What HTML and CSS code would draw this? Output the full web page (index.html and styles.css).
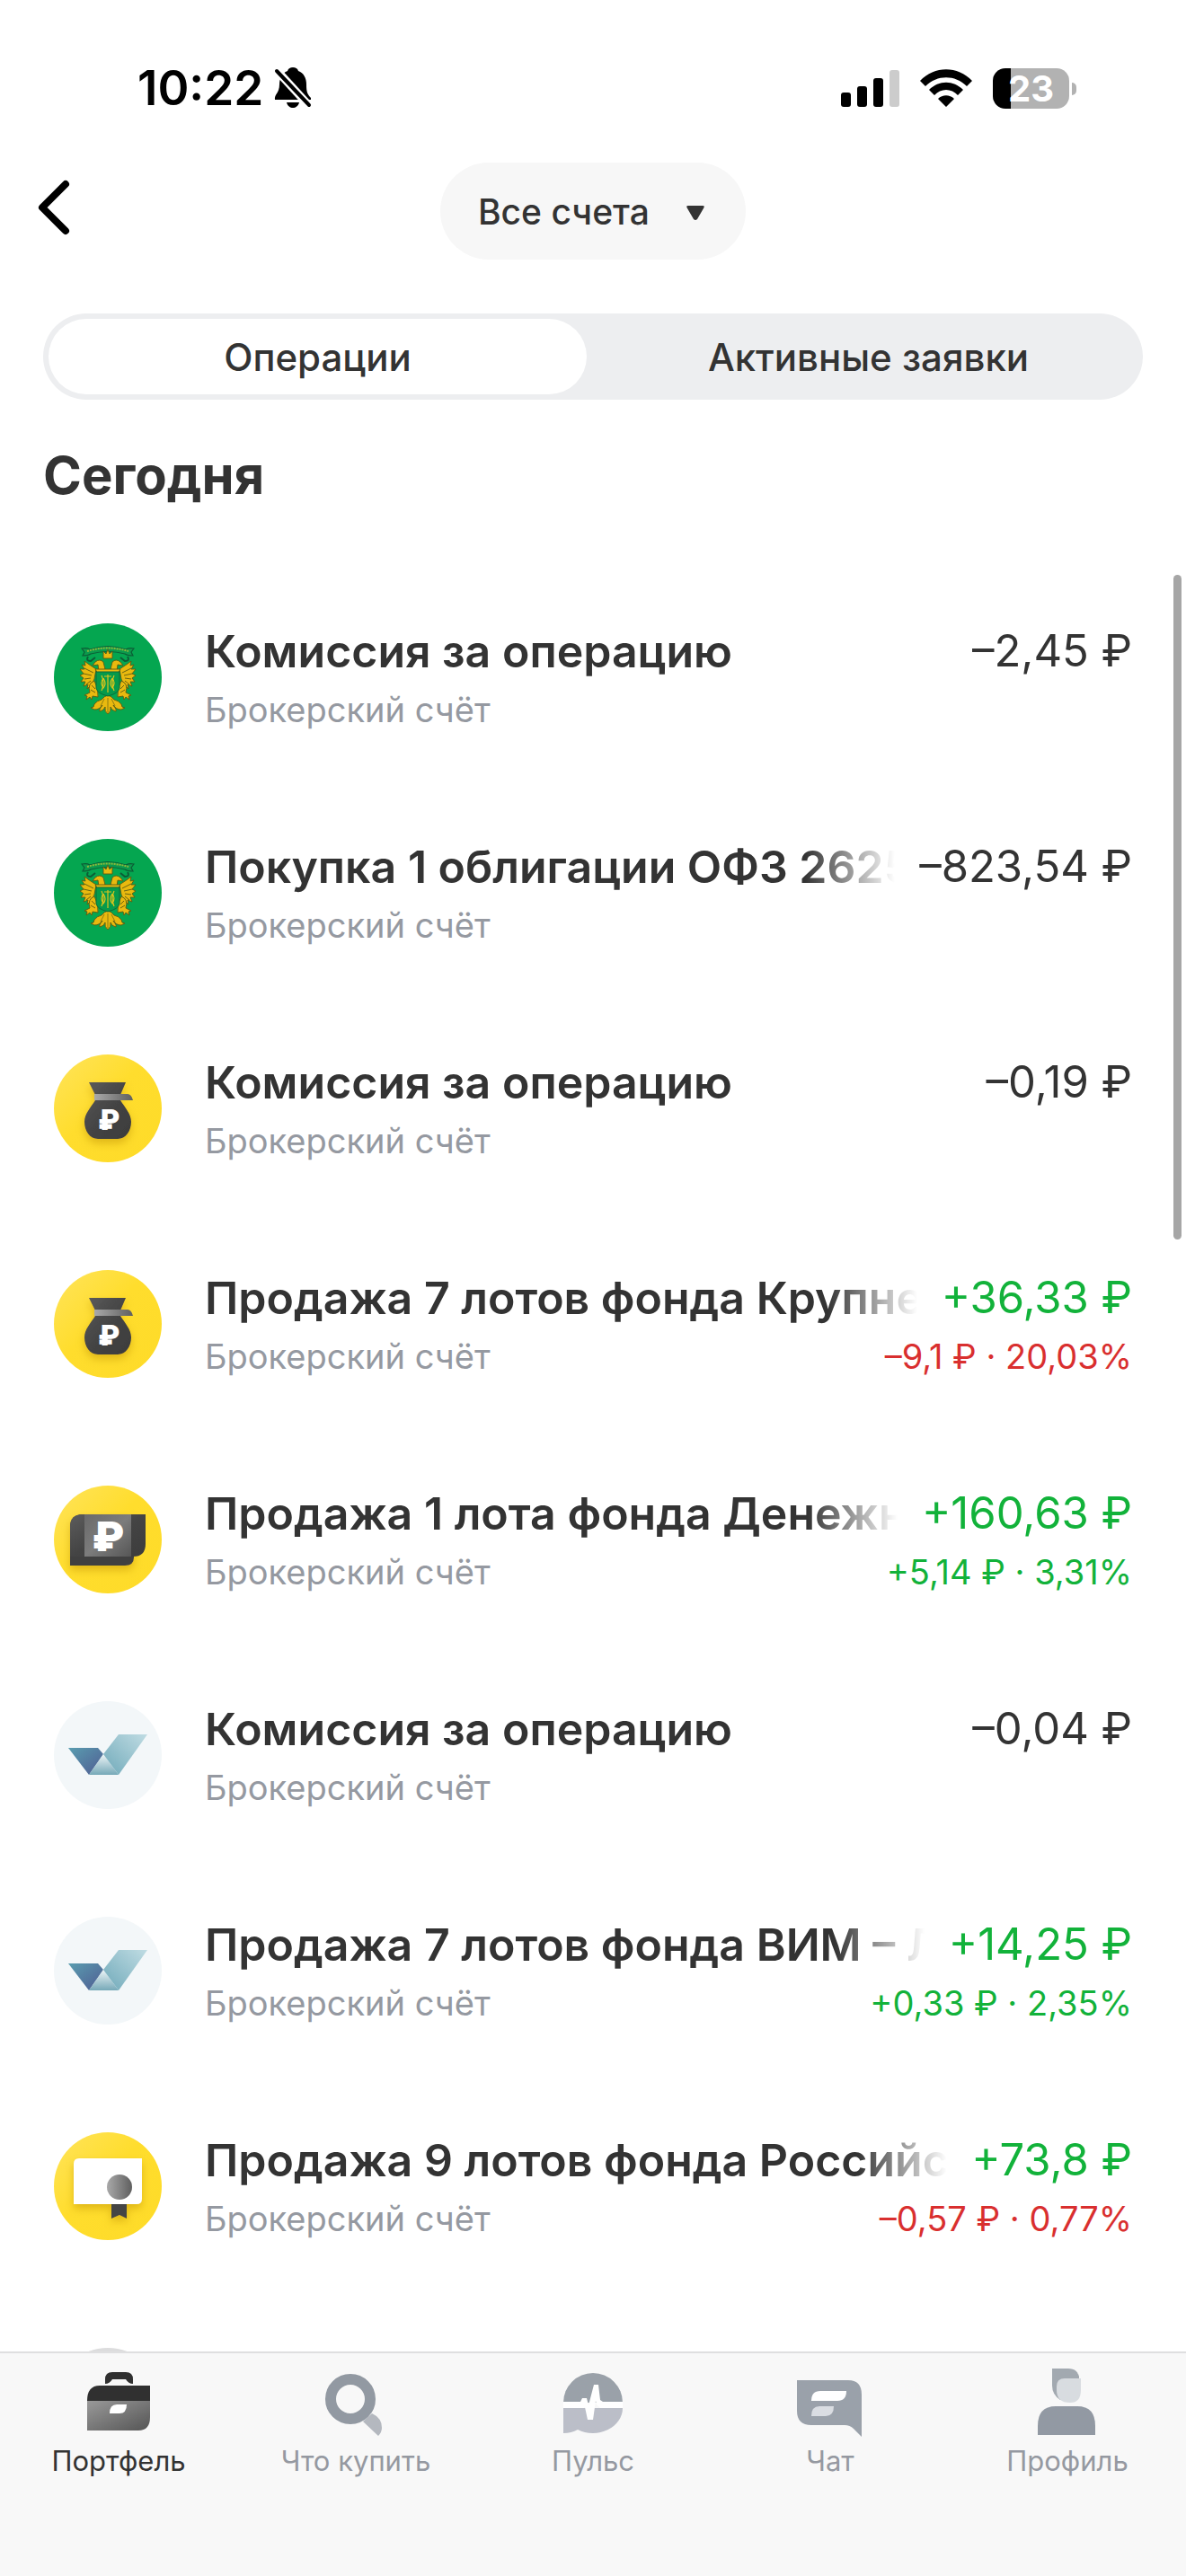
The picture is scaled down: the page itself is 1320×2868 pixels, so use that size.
FILE: index.html
```html
<!DOCTYPE html>
<html lang="ru">
<head>
    <meta charset="UTF-8">
    <meta name="viewport" content="width=device-width, initial-scale=1.0">
    <title>Операции</title>
    <link rel="stylesheet" href="styles.css">
</head>
<body>
    <!-- shared icons -->
    <svg class="sprite" aria-hidden="true">
        <defs>
            <linearGradient id="yellow" x1="0" y1="0" x2="1" y2="1">
                <stop offset="0" stop-color="#ffe45c"/>
                <stop offset="0.45" stop-color="#ffdd2d"/>
                <stop offset="1" stop-color="#fedb28"/>
            </linearGradient>
            <linearGradient id="dark" x1="0" y1="0" x2="1" y2="1">
                <stop offset="0" stop-color="#5c5c5c"/>
                <stop offset="0.5" stop-color="#444"/>
                <stop offset="1" stop-color="#3c3c3c"/>
            </linearGradient>
            <linearGradient id="band" x1="0" y1="0" x2="1" y2="0">
                <stop offset="0" stop-color="#a9a9a9"/>
                <stop offset="1" stop-color="#5f5f5f"/>
            </linearGradient>
            <linearGradient id="note" x1="0" y1="0" x2="1" y2="1">
                <stop offset="0" stop-color="#6a6a6a"/>
                <stop offset="0.5" stop-color="#7c7c7c"/>
                <stop offset="1" stop-color="#565656"/>
            </linearGradient>
            <linearGradient id="vimLeft" x1="0" y1="0" x2="1" y2="1">
                <stop offset="0" stop-color="#5a9db0"/>
                <stop offset="1" stop-color="#4f5c92"/>
            </linearGradient>
            <linearGradient id="vimMid" x1="0" y1="0" x2="0" y2="1">
                <stop offset="0" stop-color="#eef5f7"/>
                <stop offset="1" stop-color="#76a9b8"/>
            </linearGradient>
            <linearGradient id="vimRight" x1="1" y1="0" x2="0" y2="1">
                <stop offset="0" stop-color="#c0dce3"/>
                <stop offset="1" stop-color="#6fa9b9"/>
            </linearGradient>
            <linearGradient id="caseBody" x1="0" y1="0" x2="1" y2="1">
                <stop offset="0" stop-color="#999"/>
                <stop offset="1" stop-color="#555"/>
            </linearGradient>
            <filter id="shadow" x="-30%" y="-30%" width="160%" height="170%">
                <feDropShadow dx="0" dy="5" stdDeviation="5" flood-color="#b98a00" flood-opacity="0.45"/>
            </filter>

            <symbol id="ofz" viewBox="0 0 120 120">
                <circle cx="60" cy="60" r="60" fill="#05a650"/>
                <path d="M31 28q6-1 9 1 20-7 40 0 4-2 9-1l-3 4 2 4q-6 0-9-2-19-5-38 0-3 2-9 2l2-4z" fill="#0b9a4c" stroke="#0c5c35" stroke-width="1.2"/>
                <path d="M37 31q22-7 46 0" fill="none" stroke="#8fb83a" stroke-width="2" stroke-dasharray="2 1"/>
                <path d="M38 37q-3 5 3 5l5-4M82 37q3 5-3 5l-5-4" fill="none" stroke="#0c5c35" stroke-width="2"/>
                <g fill="#e9b90f" stroke="#5b5a12" stroke-width="0.9" stroke-linejoin="round">
                    <path d="M55 31l3 3 2-5 2 5 3-3v8H55z"/>
                    <path d="M57 51l-2-8q-4-4-9 0l-3 4 6-1 1 7zM63 51l2-8q4-4 9 0l3 4-6-1-1 7z"/>
                    <g id="wing">
                        <path d="M47 51l-9-6-4-3 1 5-4-1 3 5-5 0 4 5-4 2 4 3-3 4 5 0-2 5 5-2-1 5q7-5 8-11z"/>
                        <path d="M34 50l10 5M33 56l9 2M34 62l7-1M36 68l5-4" fill="none"/>
                        <path d="M45 64q-8 3-5 13l-6 3 3 1-1 4 4-3 2 3 1-4 6 1q1-10-4-18z"/>
                        <path d="M42 69l4 4M41 74l5 3" fill="none"/>
                    </g>
                    <use href="#wing" transform="matrix(-1 0 0 1 120 0)"/>
                    <path d="M46 51h28l-3 5H49z"/>
                    <path d="M60 80q-4 1-7 5-5 1-8 5 0 4-4 4l4 2q6 0 9-5-4 5-3 7 5-1 6-5-1 5 3 8 4-3 3-8 1 4 6 5 1-2-3-7 3 5 9 5l4-2q-4 0-4-4-3-4-8-5-3-4-7-5z"/>
                </g>
                <path d="M60 83v16M56 84l-4 8M64 84l4 8" stroke="#8f7d10" stroke-width="1"/>
                <path d="M47 54h26v18q-1 6-13 9-12-3-13-9z" fill="#069a4b" stroke="#0c6b3a" stroke-width="1"/>
                <path d="M53 58q4 8 0 17M67 58q-4 8 0 17M60 57v20M56 59h8M55 61q-4 5 0 11 4-5 0-11M65 61q4 5 0 11-4-5 0-11" fill="none" stroke="#dcc41c" stroke-width="1.2"/>
            </symbol>

            <symbol id="bag" viewBox="0 0 120 120">
                <circle cx="60" cy="60" r="60" fill="url(#yellow)"/>
                <g filter="url(#shadow)">
                    <path d="M39 31h41l-6 14v6c5 8 12 15 12 24 0 10-6 19-15 19H49c-9 0-15-9-15-19 0-9 7-16 12-24v-6z" fill="url(#dark)"/>
                </g>
                <path d="M45 44h37q4 0 6 7H45z" fill="url(#band)"/>
                <text x="61" y="84" class="glyph glyph-small">₽</text>
            </symbol>

            <symbol id="money" viewBox="0 0 120 120">
                <circle cx="60" cy="60" r="60" fill="url(#yellow)"/>
                <path d="M32 32h57v48q0 9-10 9H18V46q0-14 14-14z" fill="#3f3f3f" filter="url(#shadow)"/>
                <path d="M32 32h70v33q0 14-14 14H18V46q0-14 14-14z" fill="url(#dark)"/>
                <path d="M34 32h52v47H34z" fill="url(#note)"/>
                <text x="60" y="73" class="glyph">₽</text>
            </symbol>

            <symbol id="vim" viewBox="0 0 120 120">
                <circle cx="60" cy="60" r="60" fill="#f3f7f9"/>
                <path d="M16 52h33l6 7-16 23z" fill="url(#vimLeft)"/>
                <path d="M55 59l17 23H39z" fill="url(#vimMid)"/>
                <path d="M72 37h32L72 82 55 59z" fill="url(#vimRight)"/>
            </symbol>

            <symbol id="cert" viewBox="0 0 120 120">
                <circle cx="60" cy="60" r="60" fill="url(#yellow)"/>
                <g filter="url(#shadow)">
                    <path d="M28 29h70v45q0 6-6 6H22V35q0-6 6-6z" fill="#fff"/>
                    <path d="M64 80h17v16l-8-4-9 4z" fill="#444"/>
                </g>
                <circle cx="73" cy="61" r="14" fill="url(#band)"/>
            </symbol>

            <symbol id="plain" viewBox="0 0 120 120">
                <circle cx="60" cy="60" r="60" fill="#dcdcdd"/>
            </symbol>
        </defs>
    </svg>

    <header class="header">
        <div class="status">
            <div class="status-left">
                <time>10:22</time>
                <svg width="42" height="46" viewBox="0 0 42 46">
                    <path d="M21 0c3 0 5 1 6 4 6 2 9 8 9 15 0 8 1 11 5 15v2H1c-1-6 5-7 5-17C6 12 9 6 15 4c1-3 3-4 6-4zM14 39h14c-1 4-4 6-7 6s-6-2-7-6z"/>
                    <path d="M0 0l42 46" stroke="#fff" stroke-width="9"/>
                    <path d="M3 4l36 38" stroke="#000" stroke-width="4" stroke-linecap="round"/>
                </svg>
            </div>
            <div class="status-right">
                <svg width="65" height="42" viewBox="0 0 65 42">
                    <rect x="0" y="26" width="11" height="16" rx="3"/>
                    <rect x="18" y="19" width="11" height="23" rx="3"/>
                    <rect x="36" y="10" width="11" height="32" rx="3"/>
                    <rect x="54" y="1" width="11" height="41" rx="3" fill="#ccc"/>
                </svg>
                <svg width="58" height="42" viewBox="0 0 58 42">
                    <path d="M0 13C16-4 42-4 58 13l-6 6C39 6 19 6 6 19zM10 23c11-11 27-11 38 0l-6 6c-7-8-19-8-26 0zM20 33c5-5 13-5 18 0l-9 9z"/>
                </svg>
                <div class="battery"><span>23</span></div>
            </div>
        </div>

        <div class="nav">
            <button class="back" aria-label="Назад">
                <svg width="36" height="62" viewBox="0 0 36 62">
                    <path d="M31 5L5 31l26 26" fill="none" stroke="#000" stroke-width="8" stroke-linecap="round" stroke-linejoin="round"/>
                </svg>
            </button>
            <div class="account">
                <select aria-label="Счёт">
                    <option>Все счета</option>
                </select>
                <svg width="20" height="16" viewBox="0 0 20 16">
                    <path d="M2 0h16q3 0 1 3l-7 12q-2 2-4 0L1 3q-2-3 1-3z" fill="#333"/>
                </svg>
            </div>
        </div>

        <div class="tabs" role="tablist">
            <button class="tab active" role="tab" aria-selected="true">Операции</button>
            <button class="tab" role="tab" aria-selected="false">Активные заявки</button>
        </div>
    </header>

    <main class="content">
        <h1>Сегодня</h1>
        <ul class="operations">
            <li>
                <svg class="avatar"><use href="#ofz"/></svg>
                <div class="info">
                    <div class="line"><span class="title">Комиссия за операцию</span><span class="amount">–2,45 ₽</span></div>
                    <div class="line small"><span class="account-name">Брокерский счёт</span></div>
                </div>
            </li>
            <li>
                <svg class="avatar"><use href="#ofz"/></svg>
                <div class="info">
                    <div class="line"><span class="title fade">Покупка 1 облигации ОФЗ 2625</span><span class="amount">–823,54 ₽</span></div>
                    <div class="line small"><span class="account-name">Брокерский счёт</span></div>
                </div>
            </li>
            <li>
                <svg class="avatar"><use href="#bag"/></svg>
                <div class="info">
                    <div class="line"><span class="title">Комиссия за операцию</span><span class="amount">–0,19 ₽</span></div>
                    <div class="line small"><span class="account-name">Брокерский счёт</span></div>
                </div>
            </li>
            <li>
                <svg class="avatar"><use href="#bag"/></svg>
                <div class="info">
                    <div class="line"><span class="title fade">Продажа 7 лотов фонда Крупней</span><span class="amount plus">+36,33 ₽</span></div>
                    <div class="line small"><span class="account-name">Брокерский счёт</span><span class="minus">–9,1 ₽ · 20,03%</span></div>
                </div>
            </li>
            <li>
                <svg class="avatar"><use href="#money"/></svg>
                <div class="info">
                    <div class="line"><span class="title fade">Продажа 1 лота фонда Денежн</span><span class="amount plus">+160,63 ₽</span></div>
                    <div class="line small"><span class="account-name">Брокерский счёт</span><span class="plus">+5,14 ₽ · 3,31%</span></div>
                </div>
            </li>
            <li>
                <svg class="avatar"><use href="#vim"/></svg>
                <div class="info">
                    <div class="line"><span class="title">Комиссия за операцию</span><span class="amount">–0,04 ₽</span></div>
                    <div class="line small"><span class="account-name">Брокерский счёт</span></div>
                </div>
            </li>
            <li>
                <svg class="avatar"><use href="#vim"/></svg>
                <div class="info">
                    <div class="line"><span class="title fade">Продажа 7 лотов фонда ВИМ – Л</span><span class="amount plus">+14,25 ₽</span></div>
                    <div class="line small"><span class="account-name">Брокерский счёт</span><span class="plus">+0,33 ₽ · 2,35%</span></div>
                </div>
            </li>
            <li>
                <svg class="avatar"><use href="#cert"/></svg>
                <div class="info">
                    <div class="line"><span class="title fade">Продажа 9 лотов фонда Российск</span><span class="amount plus">+73,8 ₽</span></div>
                    <div class="line small"><span class="account-name">Брокерский счёт</span><span class="minus">–0,57 ₽ · 0,77%</span></div>
                </div>
            </li>
            <li>
                <svg class="avatar"><use href="#plain"/></svg>
            </li>
        </ul>
    </main>

    <nav class="tabbar">
        <a href="#" class="current">
            <svg viewBox="0 0 96 84">
                <path d="M33 20v-5q0-8 8-8h15q8 0 8 8v5q-5 0-8-5H41q-3 5-8 5zM27 22h56v17H13q0-17 14-17z" fill="#303030"/>
                <path d="M13 39h70v18q0 15-13 15H13z" fill="url(#caseBody)"/>
                <path d="M46 43h11q0 10-8 10H38q0-10 8-10z" fill="#fff"/>
            </svg>
            Портфель
        </a>
        <a href="#">
            <svg viewBox="0 0 96 84">
                <path d="M66 53q11 5 11 16 0 5-4 9L56 62z" fill="#b4b8bf"/>
                <circle cx="42" cy="37" r="22" fill="none" stroke="#9299a2" stroke-width="12"/>
            </svg>
            Что купить
        </a>
        <a href="#">
            <svg viewBox="0 0 96 84">
                <path d="M15 41a33 33 0 0 1 66 0z" fill="#9aa1a9"/>
                <path d="M15 47h66a33 28 0 0 1-50 24q-7 4-16 4z" fill="#bbbec8"/>
                <path d="M15 40h19l2-4h5l2 8 6-23h5l2 17 3 2h22v7H56l-4-4-1-4-3 21h-6l-3-14-1 1H15z" fill="#fff"/>
            </svg>
            Пульс
        </a>
        <a href="#">
            <svg viewBox="0 0 96 84">
                <path d="M11 16h57q15 0 15 16v47l-9-9q-4-4-10-4H27q-16 0-16-16z" fill="#9aa1aa"/>
                <path d="M37 28h29q0 11-10 11H27q0-11 10-11z" fill="#fff"/>
                <path d="M36 45h16q0 11-9 11H27q0-11 9-11z" fill="#dadde2"/>
            </svg>
            Чат
        </a>
        <a href="#">
            <svg viewBox="0 0 96 84">
                <path d="M31 3h18q11 0 12 11v8L40 38q-9-6-9-16z" fill="#a2a9b0"/>
                <path d="M45 14h18v13q0 14-12 14-15 0-15-14v-4q0-9 9-9z" fill="#d8dce0"/>
                <path d="M61 9q0 5-8 5h8z" fill="#a2a9b0"/>
                <path d="M15 77V67q0-22 20-22h24q20 0 20 22v10z" fill="#9299a3"/>
            </svg>
            Профиль
        </a>
    </nav>

    <div class="scrollbar"></div>
</body>
</html>
```
FILE: styles.css
```css
* {
    box-sizing: border-box;
}

body {
    position: relative;
    display: flex;
    flex-direction: column;
    height: 100vh;
    margin: 0;
    background-color: #fff;
    color: #333;
    font-family: Inter, "Noto Sans", sans-serif;
    overflow: hidden;
}

button, select {
    border: none;
    padding: 0;
    background: none;
    color: inherit;
    font-family: inherit;
    cursor: pointer;
}

svg {
    display: block;
    flex-shrink: 0;
}

.sprite {
    position: absolute;
    width: 0;
    height: 0;
}

.glyph {
    fill: #fff;
    font-size: 46px;
    font-weight: 900;
    text-anchor: middle;
}

.glyph-small {
    font-size: 31px;
}

/* status bar */
.status {
    display: flex;
    justify-content: space-between;
    padding: 66px 130px 0 153px;
    color: #000;
}

.status-left, .status-right {
    display: flex;
    align-items: center;
    height: 64px;
}

.status-left {
    gap: 12px;
    font-size: 53px;
    font-weight: 600;
}

.status-right {
    gap: 23px;
}

.battery {
    position: relative;
    width: 85px;
    height: 45px;
    border-radius: 14px;
    background: linear-gradient(to right, #000 24%, #b2b2b2 24%);
    color: #fff;
    font-size: 40px;
    font-weight: 700;
    line-height: 45px;
    text-align: center;
}

.battery::after {
    content: "";
    position: absolute;
    top: 16px;
    right: -8px;
    width: 5px;
    height: 14px;
    border-radius: 0 5px 5px 0;
    background-color: #b2b2b2;
}

/* back button and account picker */
.nav {
    display: grid;
    grid-template-columns: 1fr auto 1fr;
    align-items: center;
    margin-top: 51px;
    padding: 0 42px;
}

.back {
    justify-self: start;
    padding-bottom: 8px;
}

.account {
    position: relative;
}

.account select {
    display: block;
    height: 108px;
    padding: 0 107px 0 42px;
    border-radius: 54px;
    background-color: #f7f7f7;
    font-size: 39px;
    font-weight: 500;
    appearance: none;
}

.account svg {
    position: absolute;
    top: 48px;
    right: 46px;
    pointer-events: none;
}

/* segmented control */
.tabs {
    display: flex;
    gap: 14px;
    margin: 60px 48px 0;
    padding: 6px;
    border-radius: 48px;
    background-color: #edeef0;
}

.tab {
    flex: 1;
    height: 84px;
    border-radius: 42px;
    font-size: 42px;
    font-weight: 500;
}

.tab.active {
    background-color: #fff;
}

/* operations */
.content {
    flex: 1;
    min-height: 0;
    overflow: hidden;
}

h1 {
    margin: 50px 48px 71px;
    font-size: 58px;
    font-weight: 700;
    line-height: 68px;
}

.operations {
    margin: 0;
    padding: 0;
    list-style: none;
}

.operations li {
    display: flex;
    gap: 48px;
    padding: 60px;
}

.avatar {
    width: 120px;
    height: 120px;
}

.info {
    flex: 1;
    min-width: 0;
    display: flex;
    flex-direction: column;
    gap: 10px;
}

.line {
    display: flex;
    justify-content: space-between;
    gap: 27px;
    font-size: 50px;
    line-height: 62px;
    white-space: nowrap;
}

.line.small {
    font-size: 38px;
    line-height: 48px;
}

.title {
    min-width: 0;
    overflow: hidden;
    font-weight: 600;
}

.title.fade {
    mask-image: linear-gradient(to left, transparent, #000 100px);
}

.amount {
    font-size: 49px;
}

.account-name {
    color: #9599a1;
}

.plus {
    color: #12b23a;
}

.minus {
    color: #d92f2f;
}

/* bottom navigation */
.tabbar {
    display: flex;
    height: 250px;
    padding-top: 14px;
    border-top: 2px solid #dfdfe0;
    background-color: #f8f8f8;
}

.tabbar a {
    flex: 1;
    display: flex;
    flex-direction: column;
    align-items: center;
    gap: 4px;
    color: #9599a1;
    font-size: 31px;
    line-height: 36px;
    text-decoration: none;
}

.tabbar a.current {
    color: #333;
}

.tabbar svg {
    width: 96px;
    height: 84px;
}

.scrollbar {
    position: absolute;
    top: 640px;
    right: 5px;
    width: 9px;
    height: 740px;
    border-radius: 5px;
    background-color: #a6a6a6;
}
```
